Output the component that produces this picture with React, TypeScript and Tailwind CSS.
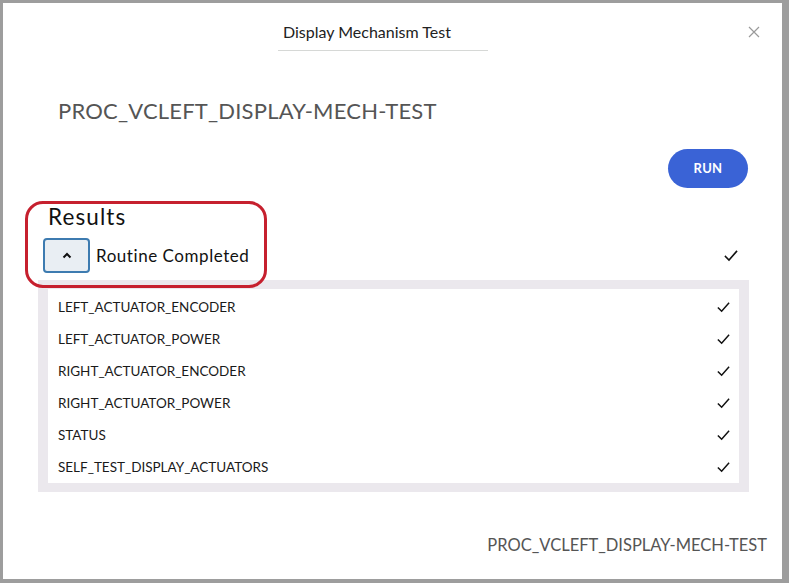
import React from 'react';

const results = [
  'LEFT_ACTUATOR_ENCODER',
  'LEFT_ACTUATOR_POWER',
  'RIGHT_ACTUATOR_ENCODER',
  'RIGHT_ACTUATOR_POWER',
  'STATUS',
  'SELF_TEST_DISPLAY_ACTUATORS',
];

const Check: React.FC<{ size?: number }> = ({ size = 14 }) => (
  <svg width={size} height={size} viewBox="0 0 14 14" fill="none">
    <polyline points="1.5,7.5 5,11 12.5,2.5" stroke="#111" strokeWidth={1.6} strokeLinecap="square" />
  </svg>
);

const App: React.FC = () => {
  return (
    <div
      className="w-[789px] h-[583px] bg-[#9d9d9d] pt-[3px] pl-[3px] pr-[7px] pb-[4px]"
      style={{ fontFamily: 'Lato, "Open Sans", sans-serif' }}
    >
      <div className="relative h-full bg-white flex flex-col">
        {/* header */}
        <div className="pt-[19px]">
          <div className="ml-[275px] w-[210px] pl-[5px] pb-[8px] border-b border-[#d6d8d6] text-[16px] leading-[20px] text-[#222]">
            Display Mechanism Test
          </div>
        </div>
        <button className="absolute top-[21px] right-[20px] w-[16px] h-[16px] flex items-center justify-center">
          <svg width="12" height="12" viewBox="0 0 12 12">
            <path d="M1 1 L11 11 M11 1 L1 11" stroke="#9a9a9a" strokeWidth={1.2} />
          </svg>
        </button>

        {/* procedure name */}
        <div className="mt-[46px] pl-[55px] text-[22px] leading-[28px] text-[#555] tracking-[0.2px]">
          PROC_VCLEFT_DISPLAY-MECH-TEST
        </div>

        {/* run */}
        <div className="flex justify-end pr-[34px] mt-[24px]">
          <button className="w-[80px] h-[39px] rounded-full bg-[#3a63d6] text-white text-[13px] font-bold tracking-[0.3px]">
            RUN
          </button>
        </div>

        {/* results */}
        <div className="mt-[15px] pl-[45px] text-[22.5px] leading-[28px] tracking-[1.1px] text-[#111]">
          Results
        </div>
        <div className="flex items-center mt-[7px] pl-[40px] pr-[44px]">
          <button className="w-[47px] h-[35px] rounded-[4px] border-2 border-[#3d7bb0] bg-[#e9eef3] flex items-center justify-center">
            <svg width="10" height="7" viewBox="0 0 10 7">
              <polyline points="1.5,5.5 5,2 8.5,5.5" fill="none" stroke="#111" strokeWidth={2} />
            </svg>
          </button>
          <span className="ml-[6px] text-[17px] tracking-[0.55px] text-[#111]">Routine Completed</span>
          <span className="ml-auto">
            <Check />
          </span>
        </div>

        <div className="mt-[7px] ml-[35px] w-[711px] bg-[#ebe8ed] p-[9px_10px]">
          <div className="bg-white pt-[2px]">
            {results.map((r) => (
              <div key={r} className="h-[32px] flex items-center pl-[10px] pr-[9px]">
                <span className="text-[13.5px] text-[#1a1a1a]">{r}</span>
                <span className="ml-auto">
                  <Check size={13} />
                </span>
              </div>
            ))}
          </div>
        </div>

        <div className="mt-auto mb-[21px] pr-[15px] text-right text-[16.5px] text-[#555]">
          PROC_VCLEFT_DISPLAY-MECH-TEST
        </div>

        {/* highlight annotation */}
        <div className="absolute left-[22px] top-[198px] w-[242px] h-[87px] rounded-[18px] border-[3px] border-[#c6202e] pointer-events-none" />
      </div>
    </div>
  );
};

export default App;
